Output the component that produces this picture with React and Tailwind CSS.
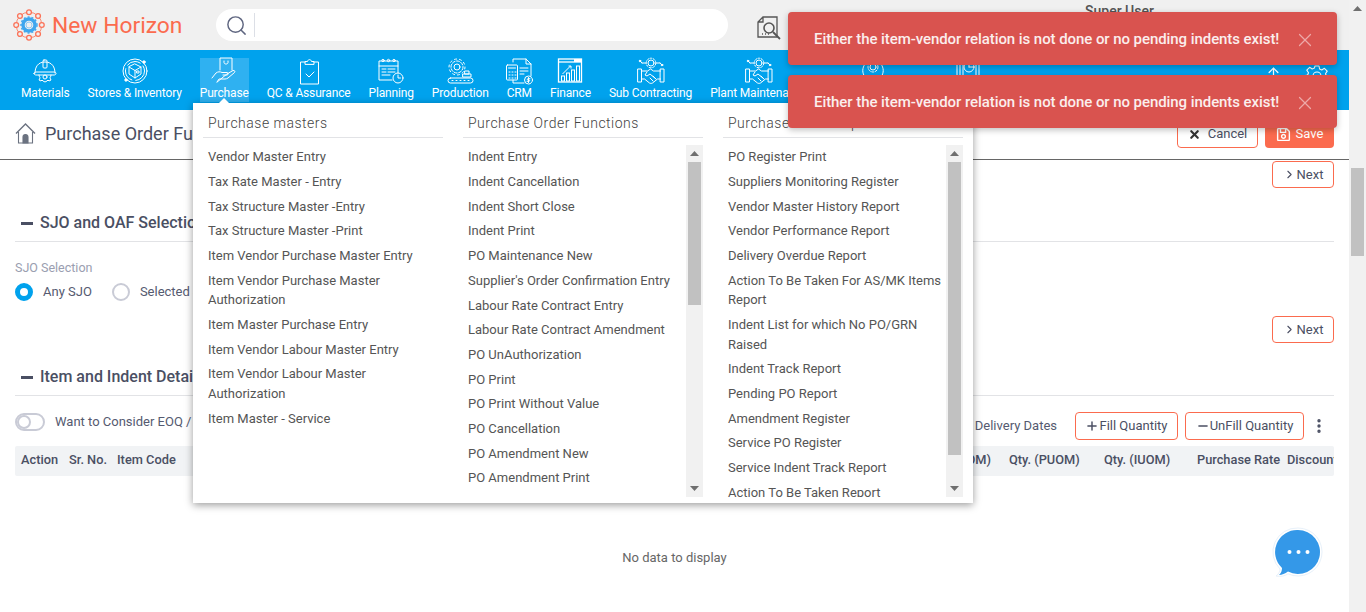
import React from 'react';
import { Search, X, Plus, Minus, MoreVertical, ChevronRight, ArrowUp } from 'lucide-react';
import { FaRegSave } from 'react-icons/fa';

const purchaseMasters = [
  'Vendor Master Entry',
  'Tax Rate Master - Entry',
  'Tax Structure Master -Entry',
  'Tax Structure Master -Print',
  'Item Vendor Purchase Master Entry',
  'Item Vendor Purchase Master Authorization',
  'Item Master Purchase Entry',
  'Item Vendor Labour Master Entry',
  'Item Vendor Labour Master Authorization',
  'Item Master - Service',
];

const orderFunctions = [
  'Indent Entry',
  'Indent Cancellation',
  'Indent Short Close',
  'Indent Print',
  'PO Maintenance New',
  "Supplier's Order Confirmation Entry",
  'Labour Rate Contract Entry',
  'Labour Rate Contract Amendment',
  'PO UnAuthorization',
  'PO Print',
  'PO Print Without Value',
  'PO Cancellation',
  'PO Amendment New',
  'PO Amendment Print',
];

const reports = [
  'PO Register Print',
  'Suppliers Monitoring Register',
  'Vendor Master History Report',
  'Vendor Performance Report',
  'Delivery Overdue Report',
  'Action To Be Taken For AS/MK Items Report',
  'Indent List for which No PO/GRN Raised',
  'Indent Track Report',
  'Pending PO Report',
  'Amendment Register',
  'Service PO Register',
  'Service Indent Track Report',
  'Action To Be Taken Report',
];

function Logo() {
  const dots = [0, 45, 90, 135, 180, 225, 270, 315];
  return (
    <svg width="32" height="32" viewBox="0 0 32 32" fill="none">
      <circle cx="16" cy="16" r="12.8" stroke="#fb8a72" strokeWidth="1" />
      {dots.map((a) => (
        <circle
          key={a}
          cx={16 + 12.8 * Math.cos((a * Math.PI) / 180)}
          cy={16 + 12.8 * Math.sin((a * Math.PI) / 180)}
          r="2.4"
          fill="#f0f0f0"
          stroke="#fb7258"
          strokeWidth="1.3"
        />
      ))}
      <circle cx="16" cy="16" r="6" stroke="#3ea6ee" strokeWidth="3.4" />
      <circle cx="16" cy="16" r="8" stroke="#3ea6ee" strokeWidth="1.4" strokeDasharray="2 2" />
      <circle cx="16" cy="16" r="3" fill="#f0f0f0" stroke="#8cc8f2" strokeWidth="1" />
    </svg>
  );
}

function NavIcon({ children }) {
  return (
    <svg className="shrink-0" width="28" height="28" viewBox="0 0 28 28" fill="none" stroke="#fff" strokeWidth="1" strokeLinejoin="round" strokeLinecap="round">
      {children}
    </svg>
  );
}

const hatIcon = (
  <NavIcon>
    <path d="M4 16c0-6 3-11 10-11s10 5 10 11" />
    <path d="M3 16.5c0-1 1-1.5 2-1.5h18c1 0 2 .5 2 1.5S24 18 23 18H5c-1 0-2-.5-2-1.500z" />
    <rect x="12" y="3" width="4" height="8" rx="1" />
    <path d="M8 18c0 2 1 2 1 3l-1 2 2 1 1-1 1 1 2 1 2-1 1-1 1 1 2-1-1-2c0-1 1-1 1-3" />
    <circle cx="14" cy="20" r="2" />
  </NavIcon>
);

const boxIcon = (
  <NavIcon>
    <circle cx="14" cy="14" r="12" />
    <circle cx="14" cy="14" r="9.500" strokeDasharray="14 4" />
    <path d="M14 7l6 3v7l-6 4-6-4v-7z" />
    <path d="M8 10l6 3.500 6-3.500M14 13.500V21" />
    <rect x="16" y="14" width="2" height="2" />
    <circle cx="23" cy="5" r="1.200" fill="#fff" />
    <circle cx="5" cy="23" r="1.200" fill="#fff" />
  </NavIcon>
);

const purchaseIcon = (
  <NavIcon>
    <path d="M10 13V1h12v12" />
    <path d="M14 4v1.500c0 2 4 2 4 0V4" />
    <path d="M2 21l4-5c2-1.500 4-1.500 6-.5h5c1.500 0 1.500 2.500 0 2.500h-4" />
    <path d="M17 17l6-3.500c1.500-.5 2.500 1 1.500 2L18 21c-1 .7-2 1-3 1H9l-2 3z" />
  </NavIcon>
);

const clipboardIcon = (
  <NavIcon>
    <path d="M10 5H5.500v22h18V5H19" />
    <path d="M10 7V4.500h2.500C13 2 16 2 16.500 4.500H19V7z" />
    <path d="M11 17l3 3 5-5" />
  </NavIcon>
);

const planIcon = (
  <NavIcon>
    <path d="M21 16V4H2v19h13" />
    <path d="M2 9h19" />
    <circle cx="6" cy="3.500" r="1.200" />
    <circle cx="11.500" cy="3.500" r="1.200" />
    <circle cx="17" cy="3.500" r="1.200" />
    <path d="M5 12h4M11 12h7M5 15h4M11 15h7M5 18h8" />
    <circle cx="21" cy="21" r="5" />
    <path d="M21 18v3h2.500" />
  </NavIcon>
);

const productionIcon = (
  <NavIcon>
    <circle cx="11" cy="10" r="3" />
    <circle cx="11" cy="10" r="6" strokeDasharray="3 1.500" />
    <circle cx="11" cy="10" r="8" strokeDasharray="2 3" />
    <rect x="19" y="14" width="4" height="3" />
    <rect x="17" y="17" width="8" height="3" />
    <rect x="2" y="21" width="25" height="5" rx="2.500" />
    <path d="M6 23.500h1M10 23.500h1M14 23.500h1M18 23.500h1M22 23.500h1" />
  </NavIcon>
);

const crmIcon = (
  <NavIcon>
    <path d="M8 5V2h13l5 5v12M26 7h-5V2M19 26H8v-3" />
    <rect x="1.500" y="8" width="11" height="15" rx="1" />
    <path d="M3.500 11h7M4 15h1M7 15h1M10 15h1M4 18h1M7 18h1M10 18h1M4 21h1M7 21h1M10 21h1" />
    <path d="M15 11h8M15 14h8M15 17h4" />
    <circle cx="23.500" cy="23" r="4" />
    <path d="M23.500 20.500v5M25 21.700h-2c-1 0-1 1.300 0 1.300h1c1 0 1 1.300 0 1.300h-2" />
  </NavIcon>
);

const financeIcon = (
  <svg className="shrink-0" width="28" height="28" viewBox="0 0 28 28" fill="none" stroke="#fff" strokeWidth="1">
    <rect x="2.500" y="2" width="23" height="23" strokeWidth="1.300" />
    <path d="M2.500 5h23" strokeWidth="1.300" />
    <rect x="18.500" y="2.500" width="6" height="2" fill="#fff" />
    <path d="M6.500 17l8-8M12.500 9h2.500v2.500" />
    <rect x="5.500" y="19" width="3" height="5" />
    <rect x="10.500" y="16" width="3" height="8" />
    <rect x="15.500" y="13" width="3" height="11" />
    <rect x="20.500" y="9" width="3" height="15" />
  </svg>
);

const handshakeIcon = (
  <NavIcon>
    <circle cx="14" cy="6" r="3" />
    <circle cx="14" cy="6" r="4.800" strokeDasharray="2 1.500" />
    <path d="M9 6H5M19 6h4M5 6l-2-2M23 6l2 2" />
    <circle cx="3" cy="4" r=".8" fill="#fff" />
    <circle cx="25" cy="8" r=".8" fill="#fff" />
    <rect x="1" y="12" width="3.500" height="13" />
    <rect x="23.500" y="12" width="3.500" height="13" />
    <path d="M4.500 14h6l3-2 3 2h7M4.500 22h3l5 4c1 .5 2 .5 3 0l5-4h3" />
    <path d="M10 15l-2 3 2 1 3-2 6 5M13 21l3 3M16 19l3 3" />
  </NavIcon>
);

const wrenchIcon = (
  <NavIcon>
    <path d="M6 6c-3 4-3 9 0 13l5 5M22 6c3 4 3 9 0 13l-5 5" />
    <circle cx="14" cy="9" r="3" />
    <circle cx="14" cy="9" r="5" strokeDasharray="2 1.500" />
  </NavIcon>
);

const reportIcon = (
  <NavIcon>
    <path d="M3 5v12M6 3v14M9 6v11M22 6v11M25 3v14" />
    <circle cx="15" cy="9" r="5" />
    <path d="M15 9V4M15 9h5" />
    <path d="M3 20h22" />
  </NavIcon>
);

const gearIcon = (
  <svg width="24" height="24" viewBox="0 0 24 24" fill="none" stroke="#fff" strokeWidth="1.100" strokeLinejoin="round">
    <path d="M10 2h4l.6 3 2.200 1 2.600-1.700 2.800 2.800-1.700 2.600.9 2.300 3 .6v3.800l-3 .6-.9 2.300 1.700 2.600-2.800 2.800-2.600-1.700-2.200 1-.6 3h-4l-.6-3-2.200-1-2.600 1.700-2.800-2.800 1.700-2.600-.9-2.300-3-.6V11.600l3-.6.900-2.300-1.700-2.600 2.800-2.800 2.600 1.700 2.200-1z" />
    <circle cx="12" cy="12" r="4" />
  </svg>
);

const navItems = [
  { label: 'Materials', icon: hatIcon },
  { label: 'Stores & Inventory', icon: boxIcon },
  { label: 'Purchase', icon: purchaseIcon, active: true },
  { label: 'QC & Assurance', icon: clipboardIcon },
  { label: 'Planning', icon: planIcon },
  { label: 'Production', icon: productionIcon },
  { label: 'CRM', icon: crmIcon },
  { label: 'Finance', icon: financeIcon },
  { label: 'Sub Contracting', icon: handshakeIcon },
  { label: 'Plant Maintenance', icon: handshakeIcon },
];

function NavItem({ item }) {
  return (
    <div className={`flex h-[44px] flex-col items-center ${item.active ? 'bg-[#2fb1f1]' : ''}`}>
      {/* zero width so the label alone sets the item's width */}
      <div className="flex h-[28px] w-0 -mt-[1px] items-center justify-center">{item.icon}</div>
      <span className="mt-[1px] whitespace-nowrap text-[12px] leading-[15px] tracking-[-0.15px] text-white">{item.label}</span>
    </div>
  );
}

function OutlineButton({ className, children }) {
  return (
    <button className={`flex items-center justify-center rounded-[4px] border border-[#fb6b4e] bg-white text-[13px] text-[#4b4f63] ${className}`}>
      {children}
    </button>
  );
}

function NextButton() {
  return (
    <OutlineButton className="h-[27px] w-[62px] gap-[1px]">
      <ChevronRight size={13} strokeWidth={2} />
      Next
    </OutlineButton>
  );
}

function SectionTitle({ children }) {
  return (
    <div className="flex h-[30px] items-start border-b border-[#e2e3e6]">
      <span className="ml-[6px] mt-[10px] h-[3px] w-[12px] bg-[#4a4f63]" />
      <span className="ml-[7px] mt-[1px] whitespace-nowrap text-[16px] font-medium leading-[20px] text-[#4a4f63]">{children}</span>
    </div>
  );
}

function Arrow({ up }) {
  return (
    <div className="flex h-[17px] items-center justify-center">
      <svg width="9" height="5" viewBox="0 0 9 5" fill="#6f6f6f">
        <path d={up ? 'M4.500 0L9 5H0z' : 'M0 0h9L4.500 5z'} />
      </svg>
    </div>
  );
}

function FakeScrollbar({ thumb }) {
  return (
    <div className="flex h-full w-[17px] shrink-0 flex-col bg-[#f1f1f1]">
      <Arrow up />
      <div className={`mx-[2px] bg-[#c1c1c1] ${thumb}`} />
      <div className="flex-1" />
      <Arrow />
    </div>
  );
}

function MenuColumn({ title, items, thumb }) {
  return (
    <div className="w-[240px]">
      <div className="h-[35px] border-b border-[#e2e3e6] px-[5px] pt-[10px] text-[14px] font-light leading-[20px] tracking-[0.5px] text-[#444]">
        {title}
      </div>
      <div className="mt-[7px] flex h-[352px]">
        <ul className="-mt-[0.2px] min-w-0 flex-1 overflow-hidden">
          {items.map((item) => (
            <li key={item} className="py-[2.6px] pl-[5px] text-[13px] leading-[19.5px] text-[#555]">
              {item}
            </li>
          ))}
        </ul>
        {thumb && <FakeScrollbar thumb={thumb} />}
      </div>
    </div>
  );
}

function Toast() {
  return (
    <div className="flex h-[53px] items-center rounded-[4px] bg-[#d9534f] pl-[26px] shadow-[0_2px_6px_rgba(0,0,0,0.25)]">
      <span className="mt-[1px] whitespace-nowrap text-[15px] font-medium tracking-[-0.07px] text-[#fbeeed]">
        Either the item-vendor relation is not done or no pending indents exist!
      </span>
      <X size={22} strokeWidth={1.3} className="ml-[15px] mt-[2px] text-[#eda9a7]" />
    </div>
  );
}

export default function App() {
  return (
    <div className="relative flex h-[612px] w-[1366px] overflow-hidden bg-white [font-family:Roboto,sans-serif]">
      <div className="w-[1349px] shrink-0">
        {/* top bar */}
        <header className="flex h-[50px] items-center bg-[#f0f0f0]">
          <div className="ml-[13px] w-[32px]">
            <Logo />
          </div>
          <span className="ml-[7px] mt-[1px] w-[164px] whitespace-nowrap text-[22.800px] leading-[30px] text-[#fb6b4e]">New Horizon</span>
          <div className="flex h-[32px] w-[512px] items-center rounded-full bg-white pl-[9px]">
            <Search size={23} strokeWidth={1.5} className="text-[#5f6680]" />
            <span className="ml-[6px] h-[24px] w-px bg-[#dcdfe6]" />
          </div>
          <svg className="ml-[29px] mt-[8px]" width="26" height="26" viewBox="0 0 26 26" fill="none" stroke="#555" strokeWidth="1.300">
            <path d="M6 1h14v20H1V6zM6 1v5H1" />
            <circle cx="12" cy="12" r="5" strokeWidth="1.600" />
            <path d="M16 16l7 7" strokeWidth="1.800" />
            <path d="M5 18h1M8 18h1M11 18h1" />
          </svg>
          <span className="ml-[302px] -mt-[27px] whitespace-nowrap text-[14px] font-medium text-[#555]">Super User</span>
        </header>

        {/* module nav */}
        <nav className="relative flex h-[60px] bg-[#00a2ed] pl-[21px] pr-[20px] pt-[8px]">
          <div className="flex gap-[18px]">
            {navItems.map((item) => (
              <NavItem key={item.label} item={item} />
            ))}
          </div>
          <div className="ml-[52px] flex h-[28px] w-[28px] items-center justify-center">{wrenchIcon}</div>
          <div className="ml-[67px] flex h-[28px] w-[28px] items-center justify-center">{reportIcon}</div>
          <ArrowUp size={15} strokeWidth={2} className="ml-auto mt-[7px] text-white" />
          <div className="ml-[24px] mt-[6px]">{gearIcon}</div>
        </nav>

        {/* page title */}
        <div className="flex h-[50px] items-start border-b border-[#666] pl-[15px] pr-[15px]">
          <svg className="mt-[13px]" width="21" height="21" viewBox="0 0 21 21" fill="none" stroke="#6b7280" strokeWidth="1.100">
            <path d="M1 10.500L10.500 1 20 10.500" strokeWidth="1.400" />
            <path d="M3.500 9v11h14V9" />
            <path d="M8 20v-6a2.500 2.500 0 0 1 5 0v6z" fill="#6b7280" />
          </svg>
          <span className="ml-[9px] mt-[12px] whitespace-nowrap text-[18px] leading-[24px] text-[#4a4f63]">Purchase Order Functions</span>
          <div className="ml-auto mt-[10px] flex gap-[7px]">
            <OutlineButton className="h-[28px] w-[81px] gap-[7px]">
              <X size={13} strokeWidth={4} className="text-[#333]" />
              Cancel
            </OutlineButton>
            <button className="flex h-[28px] w-[69px] items-center justify-center gap-[5px] rounded-[4px] bg-[#fb6b4e] text-[13px] text-white">
              <FaRegSave size={15} />
              Save
            </button>
          </div>
        </div>

        <main className="px-[15px]">
          <div className="mt-[1px] flex justify-end">
            <NextButton />
          </div>

          <div className="mt-[24px]">
            <SectionTitle>SJO and OAF Selection</SectionTitle>
          </div>
          <div className="mt-[17px] text-[12.500px] leading-[18px] text-[#9a9eb0]">SJO Selection</div>
          <div className="mt-[6px] flex h-[18px] items-center text-[13px] text-[#555a70]">
            <span className="h-[18px] w-[18px] rounded-full border-[5px] border-[#00a2ed] bg-white" />
            <span className="ml-[10px]">Any SJO</span>
            <span className="ml-[20px] h-[18px] w-[18px] rounded-full border-2 border-[#c9cbd6] bg-white" />
            <span className="ml-[10px]">Selected SJO</span>
          </div>

          <div className="mt-[15px] flex justify-end">
            <NextButton />
          </div>

          <div className="mt-[23px]">
            <SectionTitle>Item and Indent Details</SectionTitle>
          </div>
          <div className="mt-[16px] flex h-[28px] items-center text-[13px] text-[#555a70]">
            <span className="-mt-[9px] flex h-[18px] w-[30px] items-center rounded-full border-2 border-[#c9cbd6] bg-white">
              <span className="h-[14px] w-[14px] rounded-full border-2 border-[#c9cbd6] bg-white" />
            </span>
            <span className="-mt-[9px] ml-[10px] whitespace-nowrap">Want to Consider EOQ /</span>
            <span className="ml-auto whitespace-nowrap">Delivery Dates</span>
            <OutlineButton className="ml-[18px] h-[28px] w-[103px]">
              <Plus size={14} strokeWidth={2.500} />
              Fill Quantity
            </OutlineButton>
            <OutlineButton className="ml-[7px] h-[28px] w-[119px]">
              <Minus size={14} strokeWidth={2.500} />
              UnFill Quantity
            </OutlineButton>
            <span className="ml-[6px] w-[24px]">
              <MoreVertical size={18} strokeWidth={2.500} className="text-[#4a4f63]" />
            </span>
          </div>

          <div className="mt-[6px] flex h-[30px] items-center overflow-hidden rounded-[2px] bg-[#f1f3f5] pb-[2px] pl-[6px] text-[12.800px] font-medium whitespace-nowrap text-[#4a4f63]">
            <span className="w-[48px]">Action</span>
            <span className="w-[48px]">Sr. No.</span>
            <span className="w-[80px]">Item Code</span>
            <span className="ml-auto w-[38px] text-right">UOM)</span>
            <span className="ml-[18px] w-[95px] shrink-0">Qty. (PUOM)</span>
            <span className="w-[93px] shrink-0">Qty. (IUOM)</span>
            <span className="w-[90px] shrink-0">Purchase Rate</span>
            <span className="w-[47px] shrink-0 overflow-hidden">Discount</span>
          </div>

          <div className="mt-[74px] text-center text-[13px] leading-[16px] text-[#666]">No data to display</div>
        </main>
      </div>

      {/* page scrollbar */}
      <div className="flex h-full w-[17px] shrink-0 flex-col bg-[#f1f1f1]">
        <Arrow up />
        <div className="mx-[2px] mt-[151px] h-[88px] bg-[#c1c1c1]" />
      </div>

      {/* purchase dropdown */}
      <div className="absolute left-[193px] top-[103px] h-[400px] w-[780px] bg-white shadow-[0_2px_8px_rgba(0,0,0,0.4)]">
        <svg className="absolute left-[25px] -top-[5px]" width="12" height="6" viewBox="0 0 12 6" fill="#fff">
          <path d="M0 6l6-6 6 6z" />
        </svg>
        <div className="flex gap-[20px] px-[10px]">
          <MenuColumn title="Purchase masters" items={purchaseMasters} />
          <MenuColumn title="Purchase Order Functions" items={orderFunctions} thumb="h-[143px]" />
          <MenuColumn title="Purchase Order Reports" items={reports} thumb="h-[293px]" />
        </div>
      </div>

      {/* toasts */}
      <div className="absolute left-[788px] top-[12px] flex w-[549px] flex-col gap-[10px]">
        <Toast />
        <Toast />
      </div>

      {/* chat bubble */}
      <svg className="absolute left-[1272px] top-[526px]" width="54" height="54" viewBox="0 0 54 54">
        <path d="M26 2a24 24 0 1 1-10 45.800C13 50 9 51 4 50c3-2 4-5 4-7A24 24 0 0 1 26 2z" fill="#fff" stroke="#e8f1fa" strokeWidth="1" />
        <path d="M26 4a22 22 0 1 1-10 41.600C13 48 10 49 7 49c2-2 3-4 3-7A22 22 0 0 1 26 4z" fill="#3498e8" />
        <circle cx="17.500" cy="26" r="2" fill="#fff" />
        <circle cx="26.500" cy="26" r="2" fill="#fff" />
        <circle cx="35.500" cy="26" r="2" fill="#fff" />
      </svg>
    </div>
  );
}
